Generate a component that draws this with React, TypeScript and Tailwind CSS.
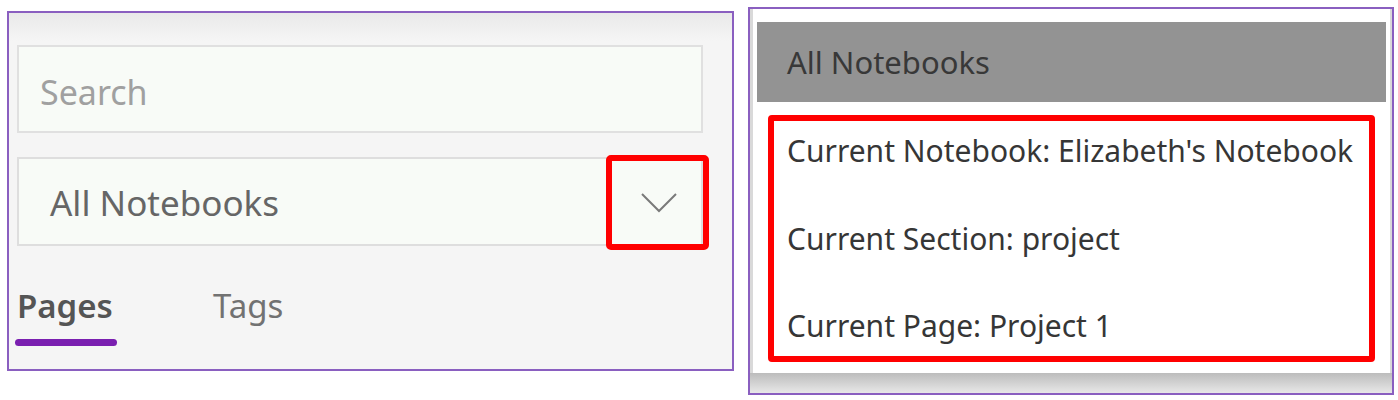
import React from "react";

const font = { fontFamily: '"Noto Sans", "Open Sans", sans-serif' };

const Chevron = () => (
  <svg width="36" height="20" viewBox="0 0 36 20" fill="none">
    <path d="M1 1 L18 18 L35 1" stroke="#7a7a7a" strokeWidth="2" />
  </svg>
);

const SearchPanel = () => (
  <div className="mt-[11px] ml-[7px] w-[727px] h-[360px] border-2 border-[#8a5fc0] bg-[linear-gradient(to_bottom,#e9e9e9,#f5f5f5_28px)] flex flex-col pl-[8px] pr-[29px] pt-[32px]">
    <div className="h-[88px] border-2 border-[#e0e0e0] bg-[#f8fbf7] flex items-center pt-[6px] pl-[21px] text-[34px] text-[#a0a0a0]">
      Search
    </div>
    <div className="relative mt-[24px] h-[89px] border-2 border-[#dedede] bg-[#f8fbf7] flex items-center justify-between pt-[3px] pl-[31px] pr-[24px]">
      <span className="text-[35px] text-[#666]">All Notebooks</span>
      <Chevron />
      <div className="absolute left-[587px] top-[-4px] w-[103px] h-[95px] border-[6px] border-[#ff0000] rounded-[5px]" />
    </div>
    <div className="mt-[40px] flex items-end gap-[96px] text-[33px]">
      <div className="flex flex-col">
        <span className="font-semibold text-[#555] leading-[40px]">Pages</span>
        <div className="mt-[13px] -ml-[2px] w-[102px] h-[7px] rounded-full bg-[#7a1fb0]" />
      </div>
      <span className="text-[#727272] leading-[40px] mb-[20px]">Tags</span>
    </div>
  </div>
);

const NotebookMenu = () => (
  <div className="mt-[7px] ml-[14px] w-[646px] h-[388px] border-2 border-[#8a5fc0] bg-[#d9d9d9] flex flex-col">
    <div className="ml-[3px] mr-[2px] h-[364px] bg-white flex flex-col pt-[13px] px-[4px]">
      <div className="h-[80px] bg-[#939393] flex items-center pl-[30px] text-[31px] text-[#383838]">
        All Notebooks
      </div>
      <div className="mt-[13px] mx-[11px] h-[247px] border-[6px] border-[#ff0000] rounded-[4px] flex flex-col justify-between pl-[13px] py-[10px] text-[30px] text-[#363636]">
        <span className="leading-[40px]">Current Notebook: Elizabeth's Notebook</span>
        <span className="leading-[40px]">Current Section: project</span>
        <span className="leading-[40px]">Current Page: Project 1</span>
      </div>
    </div>
    <div className="flex-1 bg-gradient-to-b from-[#bcbcbc] to-[#e8e8e8]" />
  </div>
);

export default function App() {
  return (
    <div className="w-[1398px] h-[400px] bg-white flex items-start" style={font}>
      <SearchPanel />
      <NotebookMenu />
    </div>
  );
}
